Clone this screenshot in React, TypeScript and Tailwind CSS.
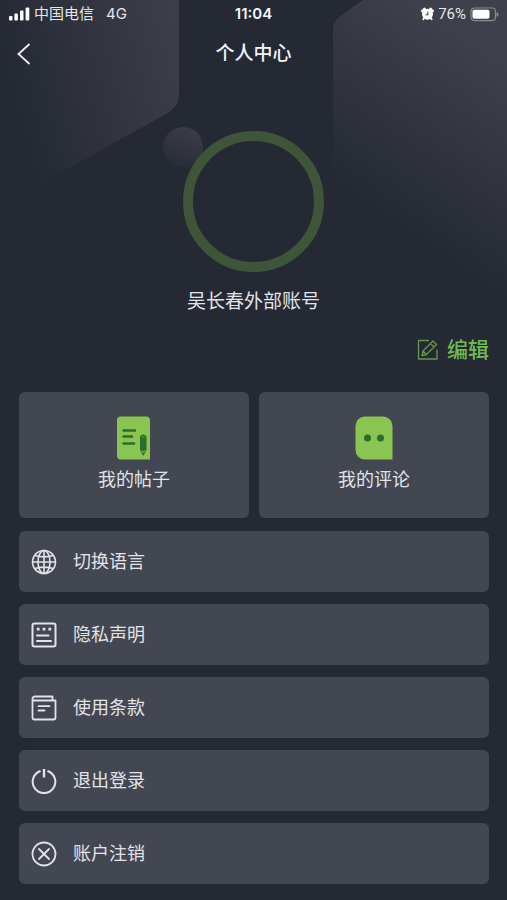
import type { ReactNode } from 'react';

interface MenuItem {
  label: string;
  icon: ReactNode;
}

const menuItems: MenuItem[] = [
  {
    label: '切换语言',
    icon: (
      <>
        <circle cx="13" cy="13" r="11.5" />
        <ellipse cx="13" cy="13" rx="6" ry="11.5" />
        <path d="M13 1.5v23M1.5 13h23M4 6.5c5 1.500 13 1.500 18 0M4 19.500c5-1.500 13-1.500 18 0" />
      </>
    ),
  },
  {
    label: '隐私声明',
    icon: (
      <>
        <rect x="1.5" y="1.5" width="23" height="23" rx="2" strokeWidth="2" />
        <path d="M5.8 7.2h2.8M11.6 7.2h2.8M17.4 7.2h2.8" strokeWidth="2.8" />
        <path d="M6 13.5h11.5M6 19h14" strokeWidth="2" strokeLinecap="round" />
      </>
    ),
  },
  {
    label: '使用条款',
    icon: (
      <>
        <path
          d="M1.5 4V22.5a2 2 0 0 0 2 2h19a2 2 0 0 0 2-2V5.5H3a1.5 1.5 0 0 1-1.5-1.5 2.5 2.5 0 0 1 2.5-2.5h17.5v4"
          strokeWidth="1.8"
          strokeLinejoin="round"
        />
        <path d="M7.5 11.2h11M7.5 15.5h6" strokeWidth="1.8" strokeLinecap="round" />
      </>
    ),
  },
  {
    label: '退出登录',
    icon: (
      <>
        <path d="M8.8 3.3a11.3 11.3 0 1 0 8.4 0" strokeWidth="2" strokeLinecap="round" />
        <path d="M13 1v8.5" strokeWidth="2.4" />
      </>
    ),
  },
  {
    label: '账户注销',
    icon: (
      <>
        <circle cx="13" cy="13" r="11.5" strokeWidth="1.8" />
        <path d="M8 8l10 10M18 8L8 18" strokeWidth="1.8" strokeLinecap="round" />
      </>
    ),
  },
];

function Backdrop() {
  return (
    <svg className="absolute inset-x-0 top-0 w-full" viewBox="0 0 507 390" fill="none" aria-hidden="true">
      <defs>
        <linearGradient id="left" x1="185" y1="60" x2="15" y2="105" gradientUnits="userSpaceOnUse">
          <stop stopColor="#3c3e4a" />
          <stop offset="0.5" stopColor="#31343f" />
          <stop offset="1" stopColor="#242934" />
        </linearGradient>
        <linearGradient id="right" x1="500" y1="60" x2="390" y2="220" gradientUnits="userSpaceOnUse">
          <stop stopColor="#3e404b" />
          <stop offset="0.5" stopColor="#32353f" />
          <stop offset="1" stopColor="#242934" />
        </linearGradient>
        <linearGradient id="ball" x1="190" y1="127" x2="174" y2="168" gradientUnits="userSpaceOnUse">
          <stop stopColor="#3b3d49" />
          <stop offset="1" stopColor="#272c37" />
        </linearGradient>
      </defs>
      <path d="M0 0h179v94c0 9-5 15-13 20L76 164 0 204z" fill="url(#left)" />
      <path d="M333 30c0-7 4-12 10-16L363 0h144v330L350 237c-11-7-17-15-17-28z" fill="url(#right)" />
      <circle cx="183" cy="147" r="20" fill="url(#ball)" />
    </svg>
  );
}

function StatusBar() {
  return (
    <div className="grid h-7 grid-cols-3 items-center px-2 text-[15px] leading-5 text-[#e4e5ea]">
      <div className="flex items-center gap-1">
        <svg width="22" height="14" viewBox="0 0 22 14" fill="#fff">
          <rect x="1" y="9" width="3.5" height="4.5" rx="1" />
          <rect x="6.4" y="6.5" width="3.5" height="7" rx="1" />
          <rect x="12" y="3.5" width="3.5" height="10" rx="1" />
          <rect x="17.6" y="0.5" width="3.7" height="13" rx="1" />
        </svg>
        <span>中国电信</span>
        <span className="ml-2">4G</span>
      </div>
      <div className="text-center font-semibold text-[#f4f4f7]">11:04</div>
      <div className="flex items-center justify-end gap-1">
        <svg width="13" height="14" viewBox="0 0 14 14">
          <path d="M1.5 3.8L3.8 1.5M12.5 3.8L10.2 1.5" stroke="#fff" strokeWidth="2.8" strokeLinecap="round" />
          <path d="M3.5 11l-1 1.6M10.5 11l1 1.6" stroke="#fff" strokeWidth="2" strokeLinecap="round" />
          <circle cx="7" cy="7.2" r="5.9" fill="#fff" />
          <path d="M7.4 4.2v3.5H4.8" fill="none" stroke="#3b3e49" strokeWidth="1.1" />
        </svg>
        <span className="font-[Roboto,sans-serif]">76%</span>
        <svg width="29" height="15" viewBox="0 0 29 15">
          <rect x="1" y="1" width="24.5" height="12.6" rx="3.5" fill="none" stroke="#888a93" strokeWidth="1.2" />
          <rect x="2.5" y="2.8" width="17" height="9" rx="1.8" fill="#fff" />
          <path d="M26.5 5c2.800.8 2.800 4 0 4.800z" fill="#888a93" />
        </svg>
      </div>
    </div>
  );
}

function PostsIcon() {
  return (
    <svg width="34" height="44" viewBox="0 0 34 44">
      <path d="M4 .5h25a4 4 0 0 1 4 4V43.5H4a4 4 0 0 1-4-4v-35a4 4 0 0 1 4-4z" fill="#8bc551" />
      <path d="M6.5 14.5H18M6.5 20.5h8.5M6.5 27.5H17" stroke="#286f2b" strokeWidth="2.6" strokeLinecap="round" />
      <path d="M23 21.500c0-4 6.500-4 6.500 0V34l-3.200 6L23 34z" fill="#286f2b" />
      <path d="M24.8 21h3M24.5 34.5l1.800 2 1.800-2" fill="none" stroke="#6ba845" strokeWidth="1.2" />
    </svg>
  );
}

function CommentsIcon() {
  return (
    <svg width="38" height="44" viewBox="0 0 38 44">
      <path d="M10 .5h18a9.500 9.500 0 0 1 9.500 9.500v33.500H10A9.500 9.500 0 0 1 .5 34V10A9.500 9.500 0 0 1 10 .5z" fill="#8bc551" />
      <circle cx="12.5" cy="22" r="3.5" fill="#286f2b" />
      <circle cx="25.5" cy="22" r="3.5" fill="#286f2b" />
    </svg>
  );
}

function Tile({ label, icon }: MenuItem) {
  return (
    <button type="button" className="flex h-[126px] flex-col items-center rounded-md bg-[#434751] pt-6">
      {icon}
      <span className="mt-2 text-lg leading-6">{label}</span>
    </button>
  );
}

export default function App() {
  return (
    <div className="relative min-h-screen bg-[#242934] pb-4 font-[Inter,'Noto_Sans_CJK_SC',sans-serif] text-[#e2e3e8]">
      <Backdrop />
      <div className="relative">
        <StatusBar />

        <header className="grid h-[51px] grid-cols-[40px_1fr_40px] items-center">
          <button type="button" aria-label="返回" className="flex h-full items-center pl-4">
            <svg width="16" height="22" viewBox="0 0 16 22" fill="none" stroke="#f0f0f4" strokeWidth="1.8">
              <path d="M13.5 1L2.5 11l11 10" />
            </svg>
          </button>
          <h1 className="text-center text-[19px] leading-6 font-medium text-[#f4f4f7]">个人中心</h1>
        </header>

        <section className="flex flex-col items-center pt-[52px]">
          <div className="size-[141px] rounded-full border-[10px] border-[#3e5539] bg-[#242934]" />
          <p className="mt-4 text-[19px] leading-7">吴长春外部账号</p>
        </section>

        <div className="flex justify-end px-[18px] pt-5">
          <button type="button" className="flex items-center gap-2 text-[21px] leading-7 font-medium text-[#6fbb52]">
            <svg width="22" height="22" viewBox="0 0 22 22" fill="none" stroke="#66984f" strokeWidth="1.3" strokeLinejoin="round">
              <path d="M12 1.5H1.5v18.500h18.500V10.500" />
              <path d="M5 16.500l1-4.500L16 2l3.500 3.500-10 10zM13.500 4.500L17 8M6 12l3.500 3.500" />
            </svg>
            编辑
          </button>
        </div>

        <main className="pt-7 pr-[18px] pl-[19px]">
          <div className="grid grid-cols-2 gap-[10px]">
            <Tile label="我的帖子" icon={<PostsIcon />} />
            <Tile label="我的评论" icon={<CommentsIcon />} />
          </div>
          <nav className="mt-[13px] flex flex-col gap-3">
            {menuItems.map((item) => (
              <button
                key={item.label}
                type="button"
                className="flex h-[61px] items-center gap-4 rounded-md bg-[#434751] pl-3 text-lg leading-6"
              >
                <svg width="26" height="26" viewBox="0 0 26 26" fill="none" stroke="#e2e3e8" strokeWidth="1.6">
                  {item.icon}
                </svg>
                {item.label}
              </button>
            ))}
          </nav>
        </main>
      </div>
    </div>
  );
}
